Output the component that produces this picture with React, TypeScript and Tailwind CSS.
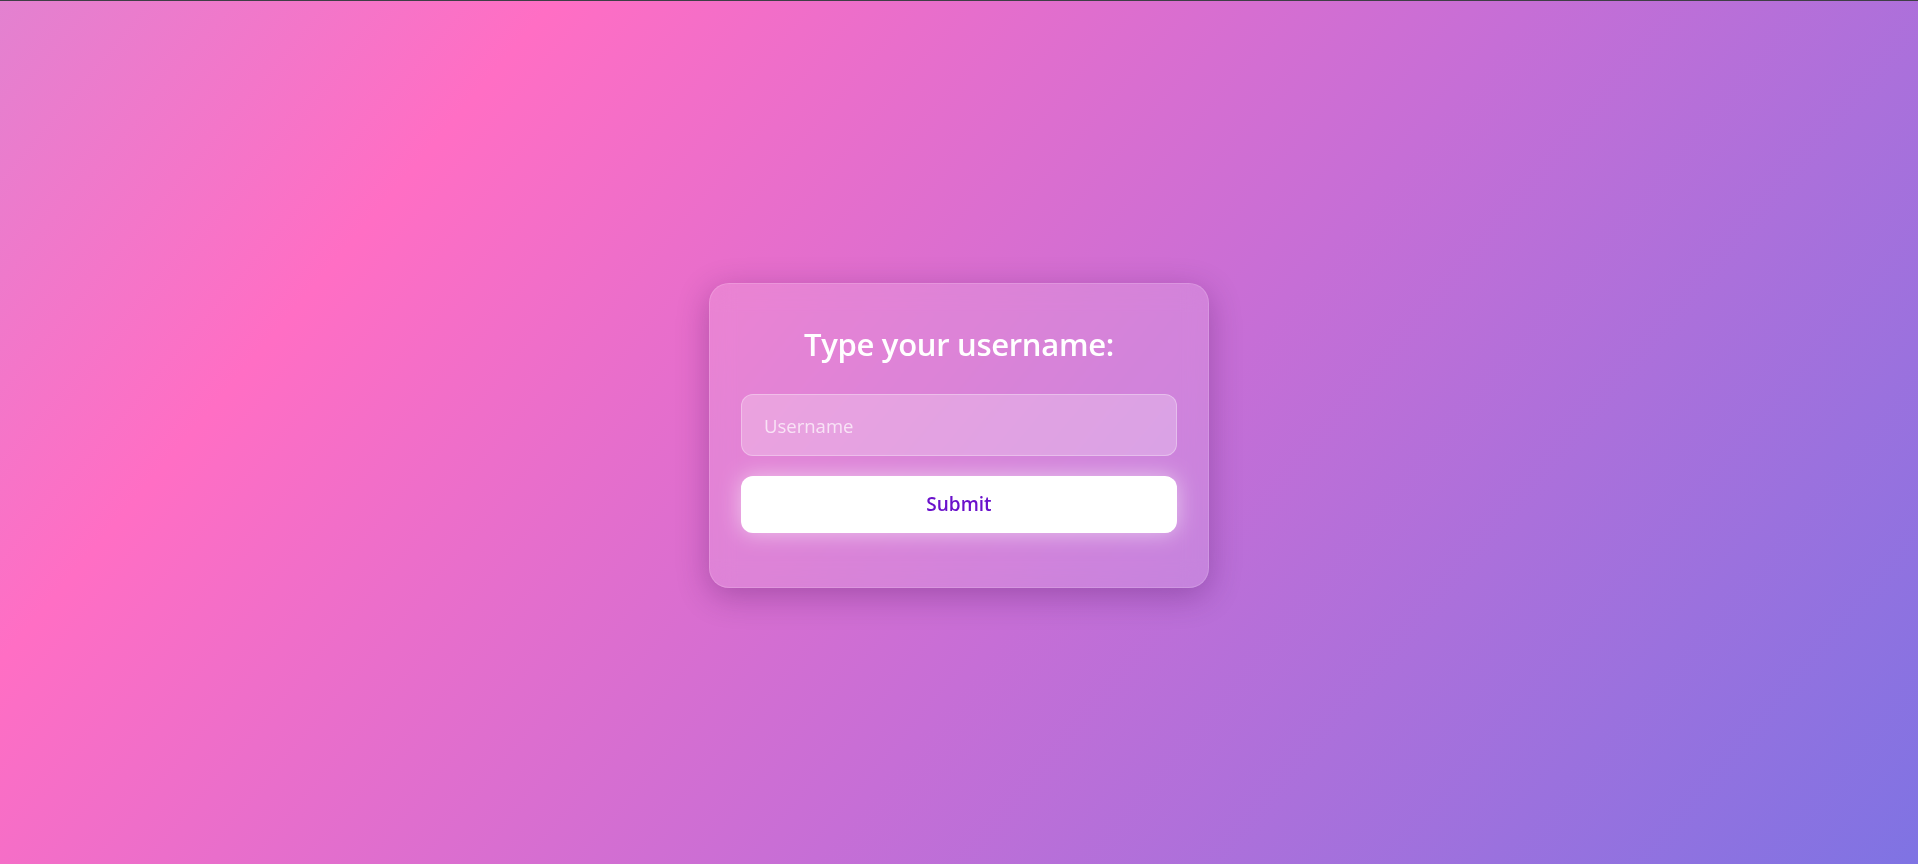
import React from "react";

export default function App() {
  return (
    <div
      className="flex h-[864px] w-full items-center justify-center border-t border-[#3f3f46] bg-[linear-gradient(130deg,#e381d0_0%,#ff6ec4_21%,#c66ed6_58%,#7f73e3_100%)]"
      style={{ fontFamily: '"Open Sans", "Noto Sans", sans-serif' }}
    >
      <div className="mt-[6px] flex w-[500px] flex-col rounded-[20px] border border-white/15 bg-white/15 px-[31px] pb-[54px] pt-[40px] shadow-[0_8px_32px_rgba(60,10,80,0.3)] backdrop-blur-md">
        <h2 className="mb-[30px] text-center text-[31px] font-semibold leading-[40px] tracking-[-0.3px] text-white">
          Type your username:
        </h2>
        <input
          type="text"
          placeholder="Username"
          className="h-[62px] w-full rounded-[12px] border border-white/30 bg-white/25 px-[22px] text-[18.5px] text-white outline-none placeholder:text-white/70"
        />
        <button className="mt-[20px] h-[57px] w-full rounded-[12px] bg-white text-[19px] font-semibold text-[#6a11cb] shadow-[0_0_22px_rgba(255,255,255,0.55)]">
          Submit
        </button>
      </div>
    </div>
  );
}
